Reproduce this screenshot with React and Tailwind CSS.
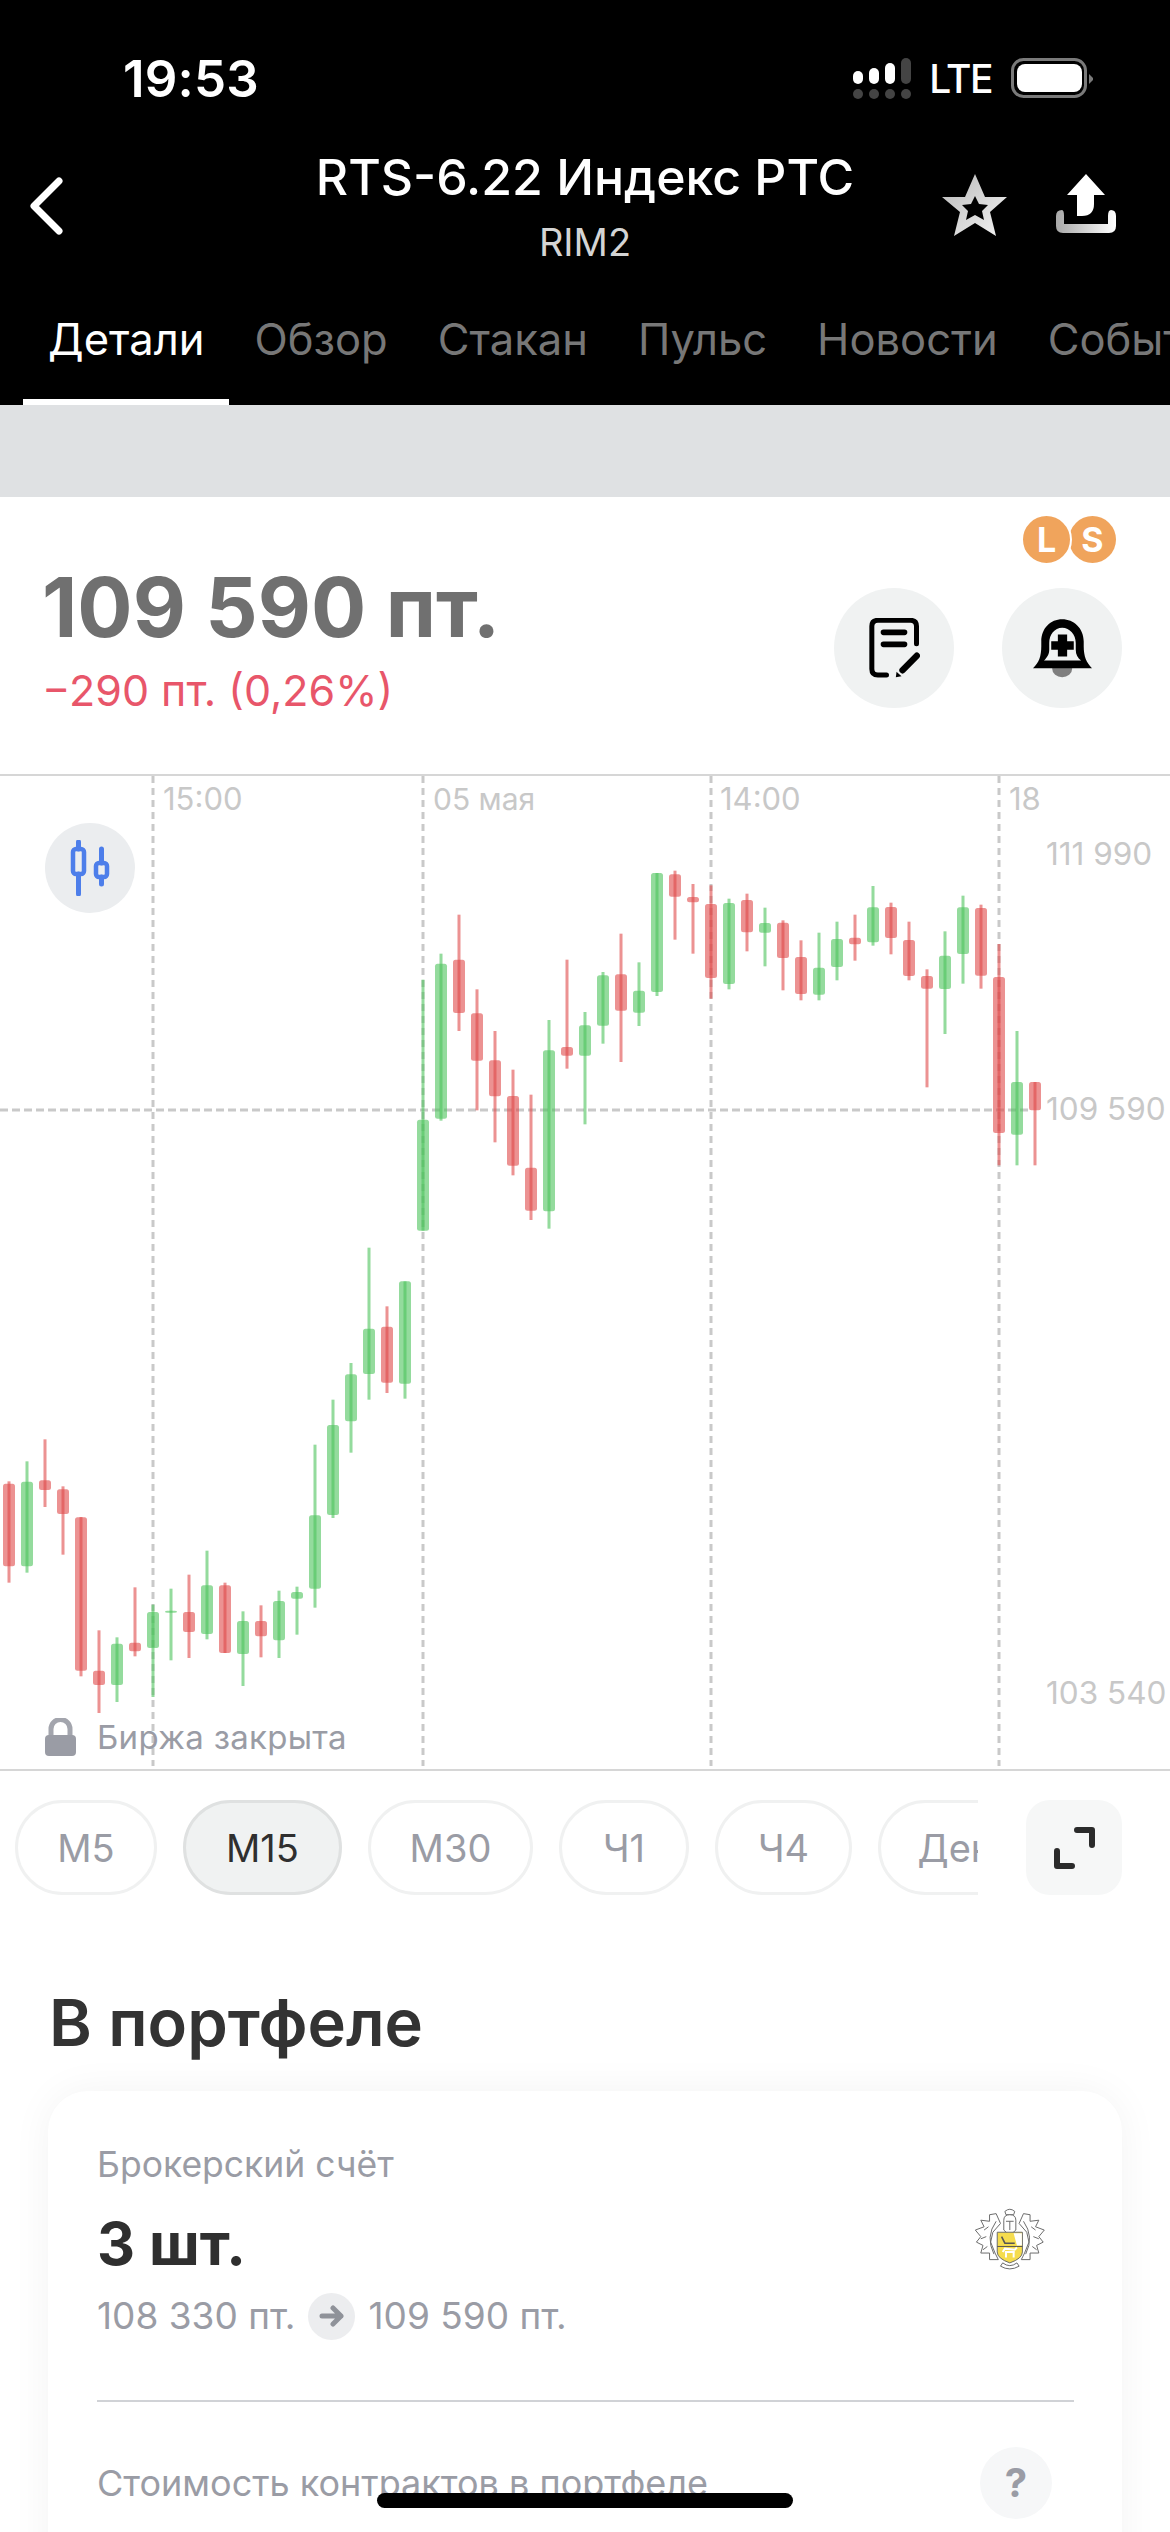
import React from "react";

const FONT = { fontFamily: "Inter, 'Noto Sans', sans-serif" };

// [colour, wickTop, bodyTop, bodyBottom, wickBottom] in zoomed coords, converted below
const A = [
  ["r",778,785,1033,1082],["g",718,779,1033,1052],["r",652,775,804,855],["r",793,802,876,998],
  ["r",885,886,1346,1363],["r",1225,1346,1389,1473],["g",1246,1265,1389,1440],["r",1096,1262,1288,1303],
  ["g",1148,1170,1278,1425],["g",1100,1166,1172,1315],["r",1058,1170,1230,1308],["g",986,1090,1236,1252],
  ["r",1082,1090,1293,1293],["g",1168,1197,1296,1392],["r",1150,1197,1243,1306],["g",1106,1137,1255,1308],
  ["g",1094,1110,1130,1238],["g",668,880,1100,1157],["g",533,609,879,888],["g",423,457,598,692],
  ["g",77,320,456,533],["r",253,314,482,513],["g",178,178,485,530],
];
const B = [
  ["g",593,1013,1346,1346],["g",515,545,1010,1016],["r",398,533,693,747],["r",622,694,836,985],
  ["r",747,835,943,1081],["r",863,942,1151,1180],["r",938,1157,1286,1314],["g",714,805,1288,1340],
  ["r",533,795,821,860],["g",690,730,821,1027],["g",570,580,731,785],["r",455,577,686,840],
  ["g",541,626,692,732],["g",273,273,630,642],["r",266,277,344,473],["r",306,345,361,515],
  ["r",310,366,588,650],["g",350,363,606,622],["r",335,354,451,508],["g",377,423,452,553],
  ["r",415,422,528,625],["r",475,525,636,655],["g",452,557,638,655],["g",419,471,555,595],
  ["r",398,467,487,536],["g",312,376,481,491],["r",362,375,468,517],["r",419,474,582,595],
  ["r",562,582,620,916],["g",448,521,621,756],["g",341,376,516,605],["r",368,378,581,620],
  ["r",486,585,1053,1150],["g",747,900,1058,1150],["r",900,900,985,1150],
];
const CANDLES = [
  ...A.map((c) => [c[0], ...c.slice(1).map((v) => 1220 + v / 3)]),
  ...B.map((c) => [c[0], ...c.slice(1).map((v) => 780 + v / 3)]),
];

function Chart() {
  return (
    <svg className="block w-full h-[995px]" viewBox="0 774 1170 995">
      {[153, 423, 711, 999].map((x) => (
        <line key={x} x1={x} x2={x} y1="774" y2="1764" stroke="#c9c9c9" strokeWidth="3" strokeDasharray="7 5" />
      ))}
      <line x1="0" x2="1030" y1="1108" y2="1108" stroke="#c9c9c9" strokeWidth="3" strokeDasharray="8 4" />
      {CANDLES.map((c, i) => {
        const x = 9 + 18 * i;
        const fill = c[0] === "g" ? "#4cc35c" : "#e04a4a";
        return (
          <g key={i} fill={fill} fillOpacity="0.6">
            <rect x={x - 1.5} width="3" y={c[1]} height={c[4] - c[1]} />
            <rect x={x - 6} width="12" y={c[2]} height={Math.max(c[3] - c[2], 2)} rx="2.5" />
          </g>
        );
      })}
    </svg>
  );
}

function Signal() {
  const cols = [[13, "#fff"], [16, "#fff"], [21, "#fff"], [26, "#444"]];
  return (
    <div className="flex gap-[6px] w-[58px]">
      {cols.map(([h, c], i) => (
        <div key={i} className="w-[10px] h-[41px] flex flex-col justify-end items-center">
          <div className="w-[10px] rounded-full" style={{ height: h, background: c }} />
          <div className="w-[10px] h-[10px] rounded-full bg-[#444] mt-[5px]" />
        </div>
      ))}
    </div>
  );
}

function Battery() {
  return (
    <svg width="82" height="40" viewBox="1009 57 82 40" className="block">
      <rect x="1010.5" y="58.5" width="73" height="37" rx="11" fill="none" stroke="#7a7a7a" strokeWidth="3" />
      <rect x="1015" y="63" width="65" height="28" rx="8" fill="#fff" />
      <path d="M1087 73 L1091 77 L1091 79 L1087 83 Z" fill="#7a7a7a" />
    </svg>
  );
}

function Star() {
  return (
    <svg width="65" height="62" viewBox="942 175 65 62" className="block">
      <defs>
        <linearGradient id="st" x1="0" y1="0" x2="1" y2="1">
          <stop offset="0" stopColor="#b8b8b8" />
          <stop offset="1" stopColor="#f4f4f4" />
        </linearGradient>
      </defs>
      <path
        fillRule="evenodd"
        fill="url(#st)"
        d="M975 175 L985 198 L1007 198 L990 213 L996 237 L975 224 L954 237 L960 213 L942 198 L965 198 Z M975 197 L971 205 L962 206 L968 212 L966 221 L975 216 L984 221 L982 212 L988 206 L979 205 Z"
      />
    </svg>
  );
}

function Share() {
  return (
    <svg width="60" height="60" viewBox="1056 174 60 60" className="block">
      <defs>
        <linearGradient id="sh" x1="0" y1="0" x2="1" y2="0">
          <stop offset="0" stopColor="#a8a8a8" />
          <stop offset="1" stopColor="#ffffff" />
        </linearGradient>
      </defs>
      <path fill="#fff" d="M1086 174 L1105 195 L1094 195 L1094 204 Q1094 216 1082 216 L1077 216 L1077 195 L1067 195 Z" />
      <path fill="url(#sh)" d="M1056 216 Q1056 210 1062 210 Q1064 210 1064 216 L1064 224 L1108 224 L1108 216 Q1108 210 1111 210 Q1116 210 1116 216 L1116 226 Q1116 233 1109 233 L1063 233 Q1056 233 1056 226 Z" />
    </svg>
  );
}

function NoteIcon() {
  return (
    <svg width="51" height="60" viewBox="210 355 152 180" className="block">
      <path d="M262 526 L236 526 Q218 526 218 508 L218 380 Q218 362 236 362 L334 362 Q352 362 352 380 L352 432" fill="none" stroke="#000" strokeWidth="15" strokeLinecap="round" />
      <path d="M253 398 H316 M253 434 H316" stroke="#000" strokeWidth="17" strokeLinecap="round" />
      <path d="M353 468 L310 512" stroke="#000" strokeWidth="19" strokeLinecap="round" />
      <path d="M290 533 L292 516 L307 530 Z" fill="#000" />
    </svg>
  );
}

function BellIcon() {
  return (
    <svg width="59" height="60" viewBox="697 355 178 180" className="block">
      <path fill="#7f7f7f" d="M755 505 H815 V508 A30 25 0 0 1 755 508 Z" />
      <path
        fillRule="evenodd"
        fill="#000"
        d="M697 506 C715 490 722 470 722 440 L722 425 C722 385 750 358 785 358 C820 358 850 385 850 425 L850 440 C850 470 858 490 875 506 Z M746 430 C746 405 762 384 785 384 C808 384 826 405 826 430 L826 450 C826 465 832 475 842 483 L730 483 C738 475 746 465 746 450 Z"
      />
      <path d="M772 404 H800 V425 H820 V450 H800 V471 H772 V450 H752 V425 H772 Z" fill="#000" />
    </svg>
  );
}

function CandleIcon() {
  return (
    <svg width="40" height="56" viewBox="71 841 40 56" fill="none" stroke="#4d7eea" strokeWidth="4.5" strokeLinecap="round">
      <rect x="74" y="850" width="11" height="25" rx="3" />
      <path d="M79.5 843 V850 M79.5 875 V895" strokeWidth="5" />
      <rect x="97" y="864" width="11" height="14" rx="3" />
      <path d="M102.5 850 V864 M102.5 878 V885" strokeWidth="5" />
    </svg>
  );
}

function LockIcon() {
  return (
    <svg width="31" height="38" viewBox="45 1717 31 38" className="block">
      <path d="M51 1736 V1728 A9.5 9.5 0 0 1 70 1728 V1736" fill="none" stroke="#a3a5ad" strokeWidth="5" />
      <rect x="45" y="1734" width="31" height="21" rx="4" fill="#9a9ca5" />
    </svg>
  );
}

function ExpandIcon() {
  return (
    <svg width="41" height="42" viewBox="1054 1827 41 42" fill="none" stroke="#2b2b2b" strokeWidth="6" strokeLinecap="round" strokeLinejoin="round">
      <path d="M1077 1830 H1092 V1845" />
      <path d="M1057 1851 V1866 H1072" />
    </svg>
  );
}

function TinkoffLogo() {
  const leaf =
    "M33 15 L27 16 L27 22 L19 21 L22 27 L14 30 L19 36 L15 41 L21 44 L19 51 L27 51 L27 57 L35 57 L32 51 L28 41 L30 32 L37 24 Z";
  const vein = "M33 22 Q23 36 31 52 M26 27 L22 30 M24 36 L19 38 M25 45 L21 48";
  return (
    <svg width="104" height="88" viewBox="0 0 95 80" className="block">
      <g fill="#fff" stroke="#6b6b6b" strokeWidth="0.9" strokeLinejoin="round">
        <path d={leaf} />
        <path d={leaf} transform="translate(91 0) scale(-1 1)" />
        <path d={vein} fill="none" />
        <path d={vein} fill="none" transform="translate(91 0) scale(-1 1)" />
        <path d="M39 60 Q45.5 65 52 60 L54 63 Q45.5 68 37 63 Z" />
        <path d="M41 13 Q45.5 9 50 13 L49 16 H42 Z" />
        <path d="M40 30 V21 Q40 16 45.5 16 Q51 16 51 21 V30 L45.5 35 Z" />
        <path d="M42 22 H49 M45.5 22 V30" fill="none" />
      </g>
      <path d="M34 32 H57 V50 Q57 56 45.5 60 Q34 56 34 50 Z" fill="#f5dc4e" stroke="#6b6b6b" strokeWidth="0.9" />
      <path d="M49 33 H56.5 V44 H52 Z" fill="#fff" />
      <path d="M34 45 H57" stroke="#555" strokeWidth="0.9" />
      <path d="M38 36 L41 42 H50" fill="none" stroke="#555" strokeWidth="1.4" />
      <path d="M39 50 L41 47 L50 48 L52 46 M42 50 V55 M49 50 V55 M41 50 H50" fill="none" stroke="#fff" strokeWidth="1.8" />
    </svg>
  );
}

const TABS = ["Детали", "Обзор", "Стакан", "Пульс", "Новости", "События"];
const PILLS = [
  ["M5", "w-[142px]"],
  ["M15", "w-[159px]"],
  ["M30", "w-[165px]"],
  ["Ч1", "w-[130px]"],
  ["Ч4", "w-[137px]"],
  ["День", "w-[176px]"],
];

export default function App() {
  return (
    <div className="relative w-[1170px] h-[2532px] overflow-hidden bg-white" style={FONT}>
      <header className="bg-black h-[405px] flex flex-col">
        <div className="mt-[50px] h-[56px] flex items-center justify-between pl-[123px] pr-[77px] text-white">
          <span className="text-[51px] font-semibold leading-none tracking-[0.2px]">19:53</span>
          <div className="flex items-center">
            <Signal />
            <span className="ml-[18px] mr-[19px] text-[39px] font-medium leading-none tracking-[-1.5px]">LTE</span>
            <Battery />
          </div>
        </div>
        <div className="h-[115px] mt-[44px] grid grid-cols-[1fr_auto_1fr]">
          <div className="pl-[30px] pt-[27px]">
            <svg width="33" height="58" viewBox="0 0 33 58" fill="none" stroke="#fff" strokeWidth="7" strokeLinecap="round" strokeLinejoin="round">
              <path d="M29 4 L4 29 L29 54" />
            </svg>
          </div>
          <div className="flex flex-col items-center">
            <span className="text-[50px] font-medium leading-[52px] mt-[1px] text-white">RTS-6.22 Индекс РТС</span>
            <span className="text-[38px] leading-[44px] mt-[17px] text-[#d4d4d4]">RIM2</span>
          </div>
          <div className="flex items-start justify-end pr-[54px] pt-[24px] gap-[49px]">
            <Star />
            <Share />
          </div>
        </div>
        <nav className="mt-[10px] h-[130px] flex overflow-hidden pl-[23px]">
          {TABS.map((t, i) => (
            <div
              key={t}
              className={`shrink-0 h-full flex items-center px-[25px] text-[43.5px] leading-none border-b-[6px] pt-[6px] ${
                i === 0 ? "text-white border-white" : "text-[#777777] border-transparent"
              }`}
            >
              {t}
            </div>
          ))}
        </nav>
      </header>

      <div className="h-[92px] bg-[#dfe1e3]" />

      <section className="relative h-[277px] flex justify-between pl-[42px] pr-[48px]">
        <div className="flex flex-col pt-[79px]">
          <span className="text-[82px] font-bold leading-[64px] text-[#707070]">109 590 пт.</span>
          <span className="text-[43px] leading-[50px] mt-[25px] text-[#e8566a]">−290 пт. (0,26%)</span>
        </div>
        <div className="flex gap-[48px] pt-[91px]">
          <div className="w-[120px] h-[120px] rounded-full bg-[#f0f2f2] flex items-center justify-center">
            <NoteIcon />
          </div>
          <div className="w-[120px] h-[120px] rounded-full bg-[#f0f2f2] flex items-center justify-center">
            <BellIcon />
          </div>
        </div>
        <div className="absolute top-[19px] left-[1023px] flex text-white font-bold text-[34px] leading-none">
          <div className="z-10 w-[51px] h-[51px] -mt-[2px] -ml-[2px] rounded-full bg-[#f0a45c] border-[2px] border-white flex items-center justify-center">L</div>
          <div className="w-[47px] h-[47px] -ml-[3px] rounded-full bg-[#f0a45c] flex items-center justify-center">S</div>
        </div>
      </section>

      <section className="relative h-[997px] border-y-2 border-[#d6d6d6]">
        <Chart />
        <span className="absolute left-[163px] top-[6px] text-[31px] leading-[34px] text-[#c8c8c8]">15:00</span>
        <span className="absolute left-[433px] top-[6px] text-[30px] leading-[34px] text-[#c8c8c8]">05 мая</span>
        <span className="absolute left-[720px] top-[6px] text-[31px] leading-[34px] text-[#c8c8c8]">14:00</span>
        <span className="absolute left-[1009px] top-[6px] text-[31px] leading-[34px] text-[#c8c8c8]">18</span>
        <span className="absolute left-[1046px] top-[60px] text-[31.5px] leading-[36px] text-[#c8c8c8]">111 990</span>
        <span className="absolute left-[1046px] top-[315px] text-[31.5px] leading-[36px] text-[#c8c8c8]">109 590</span>
        <span className="absolute left-[1046px] top-[899px] text-[31.5px] leading-[36px] text-[#c8c8c8]">103 540</span>
        <div className="absolute left-[45px] top-[47px] w-[90px] h-[90px] rounded-full bg-[#ebedef] flex items-center justify-center">
          <CandleIcon />
        </div>
        <div className="absolute left-[45px] top-[942px] flex items-center gap-[21px]">
          <LockIcon />
          <span className="text-[33px] leading-[38px] text-[#9a9ca5] tracking-[0.3px]">Биржа закрыта</span>
        </div>
      </section>

      <div className="flex pl-[15px] pr-[48px] justify-between pt-[29px]">
        <div className="w-[963px] flex gap-[26px] overflow-hidden">
          {PILLS.map(([p, w]) => (
            <div
              key={p}
              className={`${w} shrink-0 h-[95px] rounded-full border-[3px] flex items-center justify-center text-[38px] leading-none ${
                p === "M15"
                  ? "bg-[#f0f2f2] border-[#dfe1e1] text-[#2f2f2f]"
                  : "bg-white border-[#f0f1f1] text-[#9a9ca5]"
              }`}
            >
              {p}
            </div>
          ))}
        </div>
        <div className="w-[96px] h-[95px] rounded-[24px] bg-[#f6f7f7] flex items-center justify-center">
          <ExpandIcon />
        </div>
      </div>

      <h2 className="ml-[49px] mt-[92px] text-[65px] font-semibold leading-[72px] text-[#333333]">В портфеле</h2>

      <section className="mx-[48px] mt-[32px] h-[520px] rounded-[40px] bg-white shadow-[0_0_40px_rgba(0,0,0,0.05)] pl-[49px] pr-[48px] pt-[53px]">
        <p className="text-[35.5px] leading-[42px] text-[#9a9ca5]">Брокерский счёт</p>
        <div className="flex items-start justify-between">
          <div>
            <p className="text-[59px] font-bold leading-[70px] mt-[23px] text-[#2f2f2f]">3 шт.</p>
            <div className="flex items-center mt-[13px] text-[37px] leading-[48px] text-[#9a9ca5]">
              <span>108 330 пт.</span>
              <div className="mx-[13px] w-[47px] h-[47px] rounded-full bg-[#ecedef] flex items-center justify-center">
                <svg width="26" height="22" viewBox="0 0 26 22" fill="none" stroke="#8f9299" strokeWidth="5" strokeLinecap="round" strokeLinejoin="round">
                  <path d="M3 11 H22 M14 3 L22 11 L14 19" />
                </svg>
              </div>
              <span>109 590 пт.</span>
            </div>
          </div>
          <div className="mt-[11px] mr-[10px]">
            <TinkoffLogo />
          </div>
        </div>
        <div className="h-[2px] bg-[#d0d2d6] mt-[60px]" />
        <div className="flex items-center justify-between mt-[45px] pr-[22px]">
          <span className="text-[36px] leading-[44px] text-[#9a9ca5]">Стоимость контрактов в портфеле</span>
          <div className="w-[72px] h-[72px] rounded-full bg-[#f6f7f8] flex items-center justify-center text-[40px] font-bold leading-none text-[#9a9ca5]">?</div>
        </div>
      </section>

      <div className="absolute left-[377px] top-[2493px] w-[416px] h-[15px] rounded-full bg-black" />
    </div>
  );
}
